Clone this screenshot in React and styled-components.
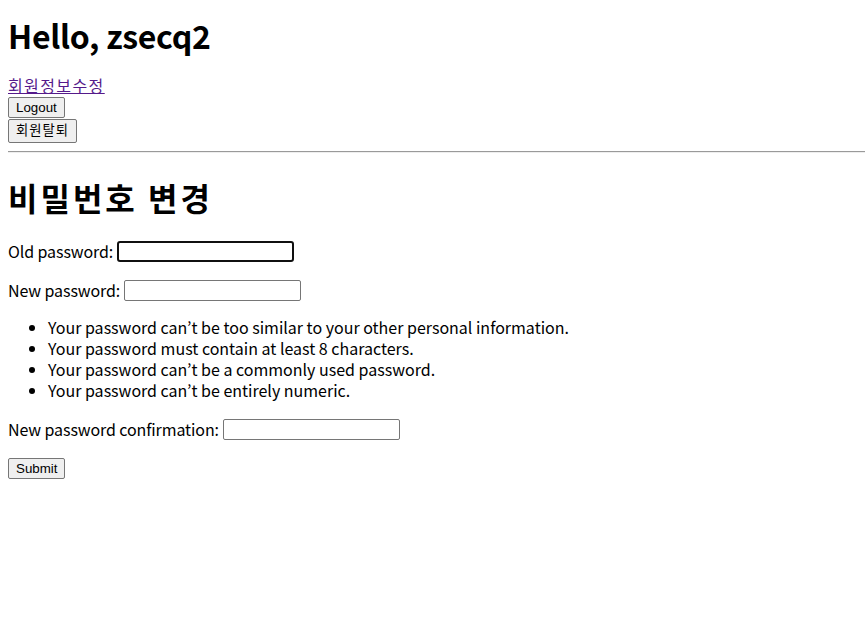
import React from "react";
import styled, { createGlobalStyle } from "styled-components";

const Global = createGlobalStyle`
  html, body { margin: 0; padding: 0; background: #fff; }
  body { font-family: "Noto Sans CJK KR", "Noto Sans", sans-serif; color: #000; }
`;

const Page = styled.div`
  padding: 8px;
  display: flex;
  flex-direction: column;
  align-items: flex-start;
`;

const Title = styled.h1`
  font-size: 32px;
  font-weight: 700;
  line-height: 40px;
  letter-spacing: ${(p) => p.$ls || 0}px;
  margin: ${(p) => p.$mt}px 0 0;
`;

const NavLink = styled.a`
  font-size: 16px;
  line-height: 21px;
  color: #551a8b;
  text-decoration: underline;
  letter-spacing: 1.4px;
  margin-top: 20px;
`;

const PlainButton = styled.button`
  font-family: Arial, "Liberation Sans", "Noto Sans CJK KR", sans-serif;
  font-size: 13.33px;
  color: #000;
  background: #efefef;
  border: 1px solid #767676;
  border-radius: 2px;
  padding: 0 7px;
  height: ${(p) => p.$h || 21}px;
  line-height: ${(p) => (p.$h || 21) - 2}px;
  letter-spacing: ${(p) => p.$ls || 0}px;
  margin-top: ${(p) => p.$mt || 0}px;
`;

const Rule = styled.hr`
  align-self: stretch;
  margin: 8px -8px 0 0;
  border: none;
  border-top: 1px solid #9a9a9a;
  border-bottom: 1px solid #eee;
  height: 0;
`;

const Field = styled.p`
  font-size: 16px;
  line-height: 21px;
  margin: ${(p) => p.$mt}px 0 0;
  display: flex;
  align-items: center;
  gap: 4px;
  letter-spacing: -0.1px;
`;

const TextInput = styled.input`
  width: 177px;
  height: 21px;
  box-sizing: border-box;
  font-size: 13.33px;
  padding: 1px 2px;
  border: ${(p) => (p.$focused ? "2px solid #101010" : "1px solid #767676")};
  border-radius: ${(p) => (p.$focused ? "3px" : "2px")};
  outline: none;
  background: #fff;
`;

const Hints = styled.ul`
  margin: 16px 0 0;
  padding-left: 40px;
  font-size: 16px;
  line-height: 21px;
`;

export default function App() {
  return (
    <>
      <Global />
      <Page>
        <Title $mt={7} $ls={-0.3}>Hello, zsecq2</Title>
        <NavLink href="#">회원정보수정</NavLink>
        <PlainButton $mt={1}>Logout</PlainButton>
        <PlainButton $mt={1} $h={24} $ls={1}>회원탈퇴</PlainButton>
        <Rule />
        <Title $mt={24} $ls={3}>비밀번호 변경</Title>
        <Field $mt={24}>
          Old password: <TextInput type="password" $focused />
        </Field>
        <Field $mt={18}>
          New password: <TextInput type="password" />
        </Field>
        <Hints>
          <li>Your password can’t be too similar to your other personal information.</li>
          <li>Your password must contain at least 8 characters.</li>
          <li>Your password can’t be a commonly used password.</li>
          <li>Your password can’t be entirely numeric.</li>
        </Hints>
        <Field $mt={18}>
          New password confirmation: <TextInput type="password" />
        </Field>
        <PlainButton $mt={18}>Submit</PlainButton>
      </Page>
    </>
  );
}
